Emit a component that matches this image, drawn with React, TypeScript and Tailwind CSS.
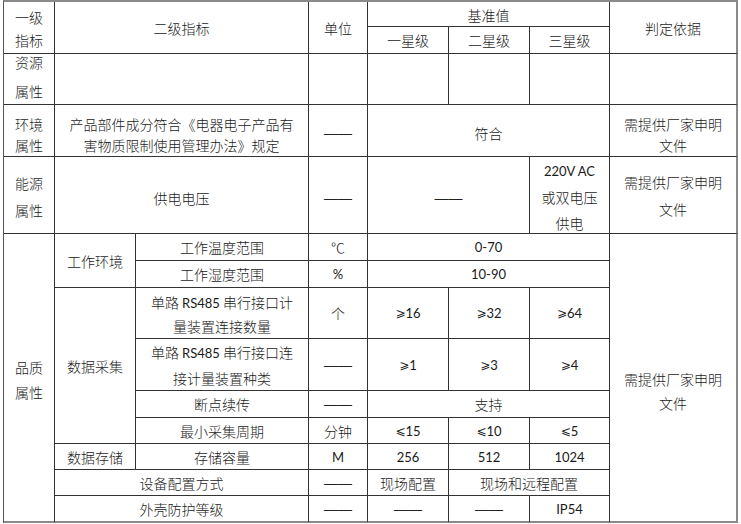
import React from "react";

const B = "border-r border-b border-[#333]";

function C({
  children,
  className = "",
}: {
  children?: React.ReactNode;
  className?: string;
}) {
  return (
    <div
      className={`flex items-center justify-center text-center leading-[20px] ${B} ${className}`}
    >
      {children}
    </div>
  );
}

const L = ({ children }: { children: React.ReactNode }) => (
  <span className="font-['Lato',sans-serif] font-normal text-[13px]">{children}</span>
);

const D = () => (
  <span className="font-['Liberation_Sans',sans-serif] font-normal text-[14px] text-[#222]">——</span>
);

const GE = () => (
  <span className="font-['DejaVu_Sans',sans-serif] font-normal text-[12px]">⩾</span>
);
const LE = () => (
  <span className="font-['DejaVu_Sans',sans-serif] font-normal text-[12px]">⩽</span>
);

const R8 = "border-r-2 border-r-[#8a8a8a]";
const BB = "border-b-2 border-b-[#8a8a8a]";

export default function App() {
  return (
    <div className="bg-white w-[741px] h-[524px] font-['Noto_Sans_CJK_SC',sans-serif] text-[14px] font-light text-[#1a1a1a]">
      <div className="ml-[3px] w-fit grid grid-cols-[51px_81px_173px_59px_81px_81px_80px_128px] grid-rows-[25px_27px_51px_52px_77px_27px_27px_51px_52px_27px_26px_26px_26px_27px] border-l border-l-[#555] border-t-2 border-t-[#8a8a8a]">
        {/* Row 1-2 header */}
        <C className="col-start-1 row-start-1 row-span-2 leading-[23px] pt-[2px]">
          一级
          <br />
          指标
        </C>
        <C className="col-start-2 col-span-2 row-start-1 row-span-2">二级指标</C>
        <C className="col-start-4 row-start-1 row-span-2">单位</C>
        <C className="col-start-5 col-span-3 row-start-1 pt-[2px]">基准值</C>
        <C className={`col-start-8 row-start-1 row-span-2 ${R8}`}>判定依据</C>
        <C className="col-start-5 row-start-2">一星级</C>
        <C className="col-start-6 row-start-2">二星级</C>
        <C className="col-start-7 row-start-2">三星级</C>

        {/* Row 3 */}
        <C className="col-start-1 row-start-3 leading-[29px] pb-[4px]">
          资源
          <br />
          属性
        </C>
        <C className="col-start-2 col-span-2 row-start-3" />
        <C className="col-start-4 row-start-3" />
        <C className="col-start-5 row-start-3" />
        <C className="col-start-6 row-start-3" />
        <C className="col-start-7 row-start-3" />
        <C className={`col-start-8 row-start-3 ${R8}`} />

        {/* Row 4 */}
        <C className="col-start-1 row-start-4 leading-[21px] pt-[8px]">
          环境
          <br />
          属性
        </C>
        <C className="col-start-2 col-span-2 row-start-4 leading-[21px] pt-[8px]">
          产品部件成分符合《电器电子产品有
          <br />
          害物质限制使用管理办法》规定
        </C>
        <C className="col-start-4 row-start-4 pt-[4px]">
          <D />
        </C>
        <C className="col-start-5 col-span-3 row-start-4 pt-[4px]">符合</C>
        <C className={`col-start-8 row-start-4 leading-[21px] pt-[8px] ${R8}`}>
          需提供厂家申明
          <br />
          文件
        </C>

        {/* Row 5 */}
        <C className="col-start-1 row-start-5 leading-[27px] pt-[4px]">
          能源
          <br />
          属性
        </C>
        <C className="col-start-2 col-span-2 row-start-5 pt-[6px]">供电电压</C>
        <C className="col-start-4 row-start-5 pt-[6px]">
          <D />
        </C>
        <C className="col-start-5 col-span-2 row-start-5 pt-[6px]">
          <D />
        </C>
        <C className="col-start-7 row-start-5 leading-[26px] pt-[2px]">
          <span>
            <L>220V AC</L>
            <br />
            或双电压
            <br />
            供电
          </span>
        </C>
        <C className={`col-start-8 row-start-5 leading-[27px] pt-[2px] ${R8}`}>
          需提供厂家申明
          <br />
          文件
        </C>

        {/* Row 6 - quality */}
        <C className={`col-start-1 row-start-6 row-span-9 leading-[25px] pt-[5px] ${BB}`}>
          品质
          <br />
          属性
        </C>
        <C className="col-start-2 row-start-6 row-span-2">工作环境</C>
        <C className="col-start-3 row-start-6">工作温度范围</C>
        <C className="col-start-4 row-start-6">℃</C>
        <C className="col-start-5 col-span-3 row-start-6">
          <L>0-70</L>
        </C>
        <C className={`col-start-8 row-start-6 row-span-9 leading-[24px] pt-[26px] ${R8} ${BB}`}>
          需提供厂家申明
          <br />
          文件
        </C>

        {/* Row 7 */}
        <C className="col-start-3 row-start-7">工作湿度范围</C>
        <C className="col-start-4 row-start-7">
          <L>%</L>
        </C>
        <C className="col-start-5 col-span-3 row-start-7">
          <L>10-90</L>
        </C>

        {/* Row 8 */}
        <C className="col-start-2 row-start-8 row-span-4">数据采集</C>
        <C className="col-start-3 row-start-8 leading-[23px] pt-[2px]">
          <span>
            单路 <L>RS485</L> 串行接口计
            <br />
            量装置连接数量
          </span>
        </C>
        <C className="col-start-4 row-start-8">个</C>
        <C className="col-start-5 row-start-8">
          <GE />
          <L>16</L>
        </C>
        <C className="col-start-6 row-start-8">
          <GE />
          <L>32</L>
        </C>
        <C className="col-start-7 row-start-8">
          <GE />
          <L>64</L>
        </C>

        {/* Row 9 */}
        <C className="col-start-3 row-start-9 leading-[25px] pt-[2px]">
          <span>
            单路 <L>RS485</L> 串行接口连
            <br />
            接计量装置种类
          </span>
        </C>
        <C className="col-start-4 row-start-9">
          <D />
        </C>
        <C className="col-start-5 row-start-9">
          <GE />
          <L>1</L>
        </C>
        <C className="col-start-6 row-start-9">
          <GE />
          <L>3</L>
        </C>
        <C className="col-start-7 row-start-9">
          <GE />
          <L>4</L>
        </C>

        {/* Row 10 */}
        <C className="col-start-3 row-start-10">断点续传</C>
        <C className="col-start-4 row-start-10">
          <D />
        </C>
        <C className="col-start-5 col-span-3 row-start-10">支持</C>

        {/* Row 11 */}
        <C className="col-start-3 row-start-11">最小采集周期</C>
        <C className="col-start-4 row-start-11">分钟</C>
        <C className="col-start-5 row-start-11">
          <LE />
          <L>15</L>
        </C>
        <C className="col-start-6 row-start-11">
          <LE />
          <L>10</L>
        </C>
        <C className="col-start-7 row-start-11">
          <LE />
          <L>5</L>
        </C>

        {/* Row 12 */}
        <C className="col-start-2 row-start-12">数据存储</C>
        <C className="col-start-3 row-start-12">存储容量</C>
        <C className="col-start-4 row-start-12">
          <L>M</L>
        </C>
        <C className="col-start-5 row-start-12">
          <L>256</L>
        </C>
        <C className="col-start-6 row-start-12">
          <L>512</L>
        </C>
        <C className="col-start-7 row-start-12">
          <L>1024</L>
        </C>

        {/* Row 13 */}
        <C className="col-start-2 col-span-2 row-start-13">设备配置方式</C>
        <C className="col-start-4 row-start-13">
          <D />
        </C>
        <C className="col-start-5 row-start-13">现场配置</C>
        <C className="col-start-6 col-span-2 row-start-13">现场和远程配置</C>

        {/* Row 14 */}
        <C className={`col-start-2 col-span-2 row-start-14 ${BB}`}>外壳防护等级</C>
        <C className={`col-start-4 row-start-14 ${BB}`}>
          <D />
        </C>
        <C className={`col-start-5 row-start-14 ${BB}`}>
          <D />
        </C>
        <C className={`col-start-6 row-start-14 ${BB}`}>
          <D />
        </C>
        <C className={`col-start-7 row-start-14 ${BB}`}>
          <L>IP54</L>
        </C>
      </div>
    </div>
  );
}
